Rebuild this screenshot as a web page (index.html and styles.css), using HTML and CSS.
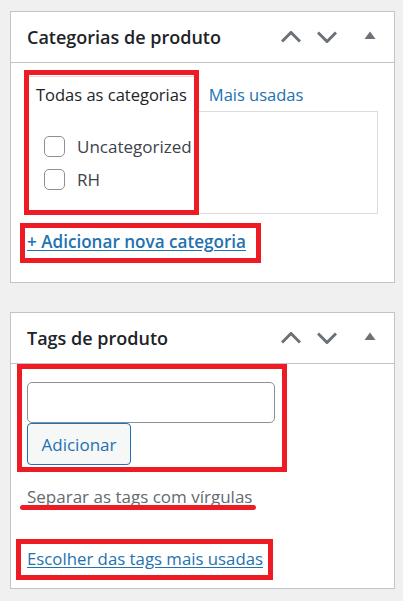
FILE: index.html
```html
<!DOCTYPE html>
<html lang="pt-BR">
<head>
<meta charset="utf-8">
<title>Produto</title>
<link rel="stylesheet" href="styles.css">
</head>
<body>
<div class="page">
  <section class="box">
    <header class="box-head">
      <h2 class="box-title">Categorias de produto</h2>
      <div class="actions">
        <span class="btn btn-up"><svg width="20" height="12" viewBox="0 0 20 12"><polyline points="1,10.5 10,1.5 19,10.5" fill="none" stroke="#6c7177" stroke-width="3"/></svg></span>
        <span class="btn btn-down"><svg width="20" height="12" viewBox="0 0 20 12"><polyline points="1,1.5 10,10.5 19,1.5" fill="none" stroke="#6c7177" stroke-width="3"/></svg></span>
        <span class="btn btn-toggle"><svg width="12" height="8" viewBox="0 0 12 8"><polygon points="0.5,8 6,0.5 11.5,8" fill="#6c7177"/></svg></span>
      </div>
    </header>
    <div class="box-body cat-body">
      <ul class="tabs">
        <li class="tab active">Todas as categorias</li>
        <li class="tab"><a href="#">Mais usadas</a></li>
      </ul>
      <div class="tab-panel">
        <ul class="checklist">
          <li><span class="cb"></span>Uncategorized</li>
          <li><span class="cb"></span>RH</li>
        </ul>
      </div>
      <p class="add-new"><a href="#">+ Adicionar nova categoria</a></p>
    </div>
    <span class="mark mark-cats"></span>
    <span class="mark mark-add"></span>
  </section>

  <section class="box">
    <header class="box-head">
      <h2 class="box-title">Tags de produto</h2>
      <div class="actions">
        <span class="btn btn-up"><svg width="20" height="12" viewBox="0 0 20 12"><polyline points="1,10.5 10,1.5 19,10.5" fill="none" stroke="#6c7177" stroke-width="3"/></svg></span>
        <span class="btn btn-down"><svg width="20" height="12" viewBox="0 0 20 12"><polyline points="1,1.5 10,10.5 19,1.5" fill="none" stroke="#6c7177" stroke-width="3"/></svg></span>
        <span class="btn btn-toggle"><svg width="12" height="8" viewBox="0 0 12 8"><polygon points="0.5,8 6,0.5 11.5,8" fill="#6c7177"/></svg></span>
      </div>
    </header>
    <div class="box-body tag-body">
      <div class="tag-input"></div>
      <button class="tag-add" type="button">Adicionar</button>
      <p class="howto">Separar as tags com vírgulas</p>
      <p class="tag-cloud-link"><a href="#">Escolher das tags mais usadas</a></p>
    </div>
    <span class="mark mark-tags"></span>
    <span class="mark-line"></span>
    <span class="mark mark-cloud"></span>
  </section>
</div>
</body>
</html>
```

FILE: styles.css
```css
* { box-sizing: border-box; }

body {
  margin: 0;
  background: #f0f0f1;
  font-family: "Open Sans", "Noto Sans", sans-serif;
  font-size: 17px;
  color: #3c434a;
}

.page {
  padding: 11px 0 0 10px;
  display: flex;
  flex-direction: column;
  gap: 29px;
}

.box {
  position: relative;
  width: 385px;
  background: #fff;
  border: 1px solid #c3c4c7;
}

.box-head {
  height: 51px;
  border-bottom: 1px solid #c3c4c7;
  display: flex;
  align-items: center;
  padding-left: 16px;
}

.box-title {
  flex: 1;
  margin: 0;
  font-size: 18px;
  font-weight: 600;
  color: #1d2327;
}

.actions {
  display: flex;
  height: 100%;
}

.btn {
  display: flex;
  align-items: center;
  justify-content: center;
  height: 100%;
}
.btn-up { width: 34px; }
.btn-down { width: 37px; }
.btn-toggle { width: 49px; }
.btn-toggle svg { margin-bottom: 5px; }

.box-body {
  padding: 0 16px;
}

/* categories */
.cat-body { padding-top: 13px; }

.tabs {
  list-style: none;
  margin: 0 0 -1px;
  padding: 0;
  display: flex;
  gap: 4px;
  position: relative;
  font-size: 16.5px;
}

.tab {
  height: 36px;
  padding: 0 8px;
  display: flex;
  align-items: center;
  border: 1px solid transparent;
  color: #1d2327;
}
.tab.active {
  background: #fff;
  border-color: #dcdcde;
  border-bottom-color: #fff;
}
.tab a { color: #2271b1; text-decoration: none; }

.tab-panel {
  height: 103px;
  border: 1px solid #dcdcde;
  padding: 18px 16px 17px;
}

.checklist {
  list-style: none;
  margin: 0;
  padding: 0;
}
.checklist li {
  height: 33px;
  display: flex;
  align-items: center;
  gap: 12px;
  color: #3c434a;
}
.cb {
  width: 21px;
  height: 21px;
  border: 1px solid #8c8f94;
  border-radius: 5px;
  background: #fff;
}

.add-new {
  margin: 15px 0 0;
  padding-bottom: 28px;
  line-height: 25px;
  font-size: 17.1px;
  font-weight: 600;
}
.add-new a, .tag-cloud-link a { color: #2271b1; text-decoration: underline; text-underline-offset: 2px; }

/* tags */
.tag-body { padding-top: 18px; padding-bottom: 17px; }

.tag-input {
  width: 248px;
  height: 41px;
  border: 1px solid #8c8f94;
  border-radius: 5px;
  background: #fff;
}

.tag-add {
  display: block;
  width: 104px;
  height: 42px;
  margin: 0;
  padding: 0;
  border: 1px solid #2271b1;
  border-radius: 4px;
  background: #f6f7f7;
  color: #2271b1;
  font: inherit;
}

.howto {
  margin: 20px 0 0;
  line-height: 24px;
  color: #646970;
}

.tag-cloud-link {
  margin: 37px 0 0;
  line-height: 25px;
  font-size: 16.8px;
}

/* annotation marks */
.mark {
  position: absolute;
  border: 5px solid #ed1c24;
  pointer-events: none;
}
.mark-cats { left: 13px; top: 58px; width: 175px; height: 145px; }
.mark-add { left: 9px; top: 211px; width: 241px; height: 40px; }
.mark-tags { left: 6px; top: 51px; width: 270px; height: 108px; }
.mark-cloud { left: 5px; top: 226px; width: 257px; height: 41px; }
.mark-line {
  position: absolute;
  left: 9px;
  top: 192px;
  width: 236px;
  height: 5px;
  border-radius: 3px;
  background: #ed1c24;
}
```
